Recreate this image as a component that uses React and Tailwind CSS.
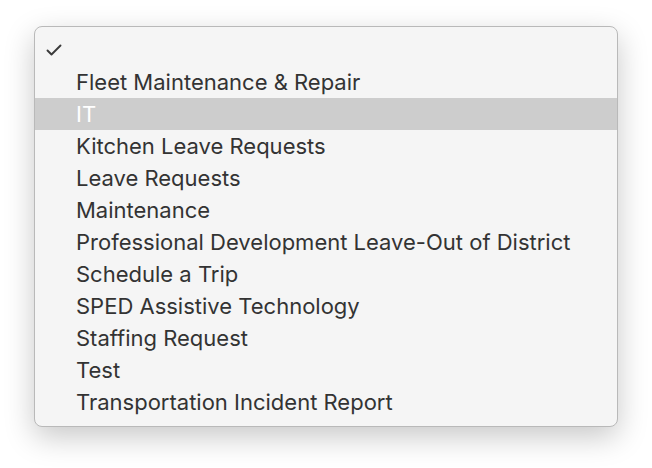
const ITEMS = [
  "Fleet Maintenance & Repair",
  "IT",
  "Kitchen Leave Requests",
  "Leave Requests",
  "Maintenance",
  "Professional Development Leave-Out of District",
  "Schedule a Trip",
  "SPED Assistive Technology",
  "Staffing Request",
  "Test",
  "Transportation Incident Report",
];

const SELECTED = "IT";

function Check() {
  return (
    <svg width="16" height="12" viewBox="0 0 16 12" fill="none">
      <path d="M1.5 6.5 L5.5 10.5 L14.5 1.5" stroke="#3a3a3a" strokeWidth="1.9" strokeLinecap="round" strokeLinejoin="round" />
    </svg>
  );
}

export default function App() {
  return (
    <div className="min-h-screen bg-white pt-[26px] pl-[34px]">
      <div
        className="w-[584px] rounded-[8px] border border-[#b9b9b9] bg-[#f5f5f5] pt-[7px] pb-2 shadow-[0_10px_30px_rgba(0,0,0,0.22)]"
        style={{ fontFamily: "Inter, 'Liberation Sans', sans-serif" }}
      >
        <div className="flex h-8 items-center pl-[11px]">
          <Check />
        </div>
        {ITEMS.map((item) => (
          <div
            key={item}
            className={
              item === SELECTED
                ? "flex h-8 items-center bg-[#cdcdcd] pl-[41px] text-[22px] leading-none text-white"
                : "flex h-8 items-center pl-[41px] text-[22px] leading-none text-[#333333]"
            }
          >
            {item}
          </div>
        ))}
      </div>
    </div>
  );
}
